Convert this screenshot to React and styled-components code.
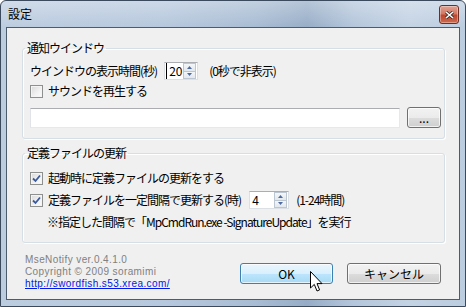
import React from 'react';
import styled, { createGlobalStyle } from 'styled-components';

const GlobalStyle = createGlobalStyle`
  html, body {
    margin: 0;
    padding: 0;
    background: #ffffff;
  }
  body {
    width: 466px;
    height: 307px;
    overflow: hidden;
    font-family: "Noto Sans CJK JP", "Noto Sans", sans-serif;
    font-size: 12px;
    color: #000;
  }
`;

const Window = styled.div`
  position: relative;
  width: 466px;
  height: 307px;
  box-sizing: border-box;
  border: 1px solid #3b4b5d;
  border-radius: 6px 6px 0 0;
  padding: 0 5px 6px 5px;
  display: flex;
  flex-direction: column;
  background:
    linear-gradient(180deg, rgba(255,255,255,0.3) 0, rgba(255,255,255,0) 26px),
    linear-gradient(90deg, #bdcde0 0%, #b6c8dd 35%, #a8bcd3 55%, #97adc7 66%, #b4c6db 76%, #c4d3e4 88%, #bccde0 100%);
`;

const TitleBar = styled.div`
  height: 26px;
  display: flex;
  align-items: flex-start;
  justify-content: space-between;
  padding-left: 2px;
`;

const Title = styled.span`
  margin-top: 6px;
  font-size: 12px;
  line-height: 14px;
`;

const CloseButton = styled.div`
  margin-top: 4px;
  margin-right: 1px;
  width: 20px;
  height: 19px;
  box-sizing: border-box;
  border: 1px solid #6d2f25;
  border-radius: 3px;
  background: linear-gradient(180deg, #e2a293 0%, #d27a66 45%, #c0462f 55%, #cd6a4d 100%);
  box-shadow: inset 0 0 0 1px rgba(255,255,255,0.35);
  display: flex;
  align-items: center;
  justify-content: center;
`;

const Client = styled.div`
  flex: 1;
  border: 1px solid #4d5c6c;
  background: #f0f0f0;
  padding: 0 14px 0 15px;
  display: flex;
  flex-direction: column;
  letter-spacing: -1px;
`;

const Group = styled.fieldset`
  margin: ${p => p.$top}px 0 0;
  padding: ${p => p.$pad};
  border: 1px solid #d5dfe5;
  border-radius: 3px;
  box-shadow: inset 1px 1px 0 #ffffff, 1px 1px 0 #ffffff;
  min-width: 0;
`;

const Legend = styled.legend`
  padding: 0 2px;
  margin-left: -5px;
  line-height: 14px;
`;

const Row = styled.div`
  display: flex;
  align-items: center;
  height: ${p => p.$h || 20}px;
  margin-top: ${p => p.$mt || 0}px;
  padding-left: ${p => p.$indent || 0}px;
  white-space: nowrap;
`;

const Text = styled.span`
  margin-left: ${p => p.$ml || 0}px;
  line-height: 14px;
`;

const Box = styled.span`
  width: 13px;
  height: 13px;
  box-sizing: border-box;
  border: 1px solid #8e8f8f;
  background: linear-gradient(135deg, #d9d9d9 0%, #f2f2f2 60%, #fcfcfc 100%);
  box-shadow: inset 0 0 0 1px #f4f4f4;
  display: flex;
  align-items: center;
  justify-content: center;
  flex-shrink: 0;
`;

const Spin = styled.div`
  margin-left: ${p => p.$ml}px;
  width: ${p => p.$w}px;
  height: 18px;
  box-sizing: border-box;
  background: #fff;
  border: 1px solid #dbdfe6;
  border-top-color: #abadb3;
  display: flex;
  align-items: stretch;
  letter-spacing: 0;
`;

const SpinValue = styled.span`
  flex: 1;
  padding-left: 2px;
  line-height: 16px;
  border-left: ${p => (p.$caret ? '1px solid #000' : 'none')};
  margin-left: ${p => (p.$caret ? '1px' : '0')};
`;

const SpinButtons = styled.div`
  width: 13px;
  margin: 0 1px 0 0;
  display: flex;
  flex-direction: column;
`;

const SpinHalf = styled.div`
  flex: 1;
  border: 1px solid #bcc6d3;
  border-top-width: ${p => (p.$down ? 0 : 1)}px;
  background: linear-gradient(180deg, #f4f6f8, #e3e8ee);
  display: flex;
  align-items: center;
  justify-content: center;
`;

const TextInput = styled.div`
  flex: 1;
  height: 20px;
  box-sizing: border-box;
  background: #fff;
  border: 1px solid #e3e9ef;
  border-top-color: #abadb3;
  border-left-color: #e2e3ea;
`;

const Button = styled.div`
  width: ${p => p.$w}px;
  height: ${p => p.$h || 21}px;
  margin-left: ${p => p.$ml || 0}px;
  box-sizing: border-box;
  border: 1px solid ${p => (p.$hot ? '#3c7fb1' : '#707070')};
  border-radius: 3px;
  background: ${p =>
    p.$hot
      ? 'linear-gradient(180deg, #eaf6fd 0%, #d9f0fc 50%, #bee6fd 50%, #a7d9f5 100%)'
      : 'linear-gradient(180deg, #f2f2f2 0%, #ebebeb 50%, #dddddd 50%, #cfcfcf 100%)'};
  box-shadow: inset 0 0 0 1px rgba(255,255,255,0.7);
  display: flex;
  align-items: center;
  justify-content: center;
  line-height: 14px;
  letter-spacing: 0;
  flex-shrink: 0;
`;

const Footer = styled.div`
  display: flex;
  justify-content: space-between;
  align-items: flex-start;
  padding: 11px 4px 0 3px;
`;

const Info = styled.div`
  display: flex;
  flex-direction: column;
  color: #808080;
  font-family: "Liberation Sans", Arial, sans-serif;
  font-size: 10px;
  line-height: 12px;
  letter-spacing: 0.4px;
`;

const InfoLine = styled.span`
  display: block;
  height: 12px;
`;

const Link = styled.a`
  display: block;
  height: 12px;
  color: #0018e8;
  text-decoration: underline;
`;

const Buttons = styled.div`
  display: flex;
  margin-top: 9px;
`;

const Cursor = styled.svg`
  position: absolute;
  left: 309px;
  top: 270px;
`;

function Check({ checked }) {
  return (
    <Box>
      {checked && (
        <svg width="9" height="9" viewBox="0 0 9 9">
          <path d="M1 4.5 L3.5 7 L8 1.5" fill="none" stroke="#3b5a9e" strokeWidth="1.8" />
        </svg>
      )}
    </Box>
  );
}

function Spinner({ value, width, ml, caret }) {
  return (
    <Spin $w={width} $ml={ml}>
      <SpinValue $caret={caret}>{value}</SpinValue>
      <SpinButtons>
        <SpinHalf>
          <svg width="5" height="3" viewBox="0 0 5 3"><path d="M0 3 L2.5 0 L5 3 Z" fill="#4d6aa5" /></svg>
        </SpinHalf>
        <SpinHalf $down>
          <svg width="5" height="3" viewBox="0 0 5 3"><path d="M0 0 L2.5 3 L5 0 Z" fill="#4d6aa5" /></svg>
        </SpinHalf>
      </SpinButtons>
    </Spin>
  );
}

export default function App() {
  return (
    <>
      <GlobalStyle />
      <Window>
        <TitleBar>
          <Title>設定</Title>
          <CloseButton>
            <svg width="9" height="8" viewBox="0 0 9 8">
              <path d="M1 1 L8 7 M8 1 L1 7" stroke="#3a2a2a" strokeWidth="3" />
              <path d="M1 1 L8 7 M8 1 L1 7" stroke="#ffffff" strokeWidth="1.6" />
            </svg>
          </CloseButton>
        </TitleBar>
        <Client>
          <Group $top={13} $pad="6px 3px 10px 7px">
            <Legend>通知ウインドウ</Legend>
            <Row>
              <Text>ウインドウの表示時間(秒)</Text>
              <Spinner value="20" width={34} ml={7} caret />
              <Text $ml={11}>(0秒で非表示)</Text>
            </Row>
            <Row>
              <Check />
              <Text $ml={5}>サウンドを再生する</Text>
            </Row>
            <Row $mt={6} $h={21}>
              <TextInput />
              <Button $w={34} $ml={7}>...</Button>
            </Row>
          </Group>
          <Group $top={7} $pad="7px 3px 9px 7px">
            <Legend>定義ファイルの更新</Legend>
            <Row $h={22}>
              <Check checked />
              <Text $ml={5}>起動時に定義ファイルの更新をする</Text>
            </Row>
            <Row $h={22}>
              <Check checked />
              <Text $ml={5}>定義ファイルを一定間隔で更新する(時)</Text>
              <Spinner value="4" width={40} ml={8} />
              <Text $ml={7}>(1-24時間)</Text>
            </Row>
            <Row $h={22} $indent={17}>
              <Text>※指定した間隔で「MpCmdRun.exe -SignatureUpdate」を実行</Text>
            </Row>
          </Group>
          <Footer>
            <Info>
              <InfoLine>MseNotify ver.0.4.1.0</InfoLine>
              <InfoLine>Copyright © 2009 soramimi</InfoLine>
              <Link href="#">http://swordfish.s53.xrea.com/</Link>
            </Info>
            <Buttons>
              <Button $w={93} $hot>OK</Button>
              <Button $w={94} $ml={14}>キャンセル</Button>
            </Buttons>
          </Footer>
        </Client>
        <Cursor width="14" height="22" viewBox="0 0 14 22">
          <path d="M0.5 0.5 L0.5 17 L4.3 13.4 L7 20 L9.6 18.9 L7 12.6 L12 12.6 Z" fill="#ffffff" stroke="#000000" strokeWidth="1" />
        </Cursor>
      </Window>
    </>
  );
}
